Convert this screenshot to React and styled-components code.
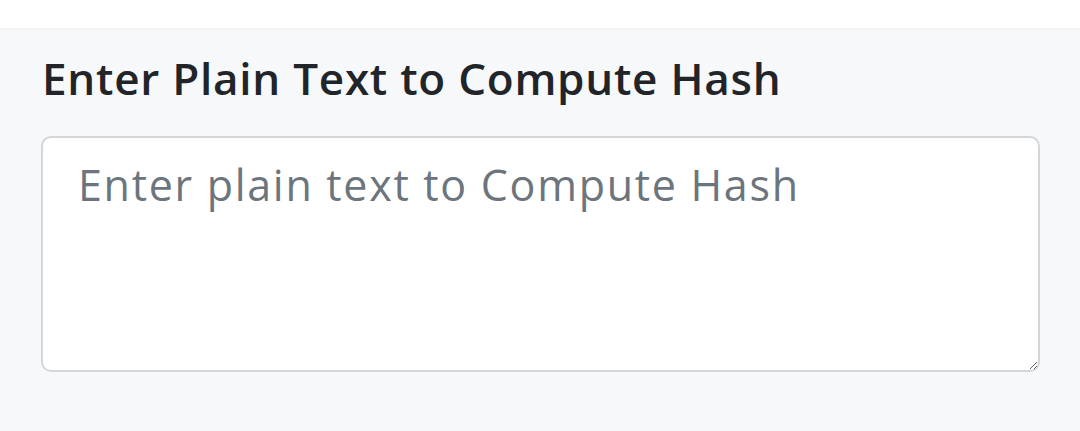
import styled, { createGlobalStyle } from "styled-components";

const GlobalStyle = createGlobalStyle`
  html, body {
    margin: 0;
    padding: 0;
    background: #ffffff;
    font-family: "Open Sans", "Liberation Sans", sans-serif;
  }
`;

const Page = styled.div`
  display: flex;
  flex-direction: column;
  min-height: 431px;
`;

const TopBar = styled.div`
  height: 28px;
  background: #ffffff;
`;

const Section = styled.section`
  flex: 1;
  background: #f7f8fa;
  box-shadow: inset 0 3px 4px -2px rgba(0, 0, 0, 0.04);
  padding: 20px 40px 40px 41px;
`;

const Heading = styled.h2`
  margin: 0 0 28px 1px;
  font-size: 44px;
  font-weight: 600;
  line-height: 60px;
  letter-spacing: 0.75px;
  color: #212529;
`;

const Input = styled.textarea`
  display: block;
  box-sizing: border-box;
  width: 100%;
  height: 236px;
  padding: 16px 35px;
  border: 2px solid #d4d7da;
  border-radius: 10px;
  background: #ffffff;
  font-family: inherit;
  font-size: 43px;
  line-height: 62px;
  letter-spacing: 1.7px;
  color: #212529;
  outline: none;

  &::placeholder {
    color: #6c757d;
  }
`;

const App = () => {
  return (
    <Page>
      <GlobalStyle />
      <TopBar />
      <Section>
        <Heading>Enter Plain Text to Compute Hash</Heading>
        <Input placeholder="Enter plain text to Compute Hash" />
      </Section>
    </Page>
  );
};

export default App;
